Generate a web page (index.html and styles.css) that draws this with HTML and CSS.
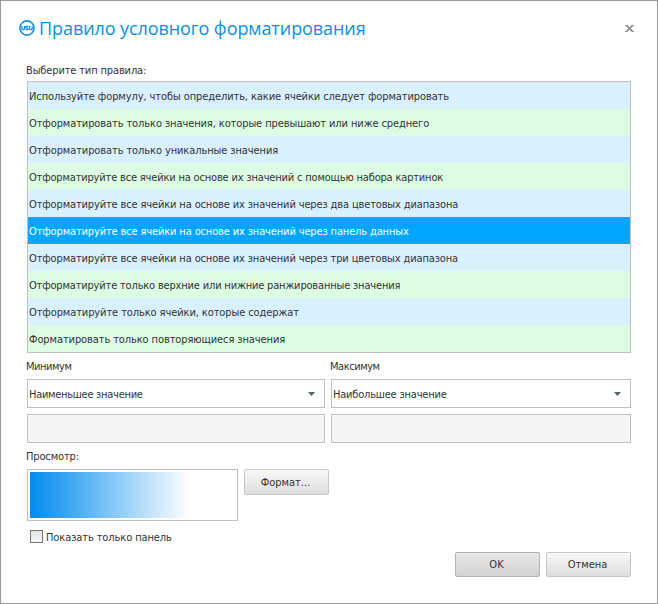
FILE: index.html
```html
<!DOCTYPE html>
<html lang="ru">
<head>
<meta charset="utf-8">
<title>Правило условного форматирования</title>
<link rel="stylesheet" href="styles.css">
</head>
<body>
<main class="dialog">
  <header class="titlebar">
    <svg class="logo" width="16" height="16" viewBox="0 0 16 16" fill="none" stroke="#0d8de8">
      <circle cx="8" cy="8" r="7.1" stroke-width="1.6"/>
      <path d="M2.9 6v2.4q0 1.3 1.3 1.3t1.3-1.3V6M9.4 6.4H7.5q-.8 0-.8.8t.8.8h.9q.8 0 .8.9t-.8.8H6.5M10.6 6v2.4q0 1.3 1.3 1.3t1.3-1.3V6" stroke-width="1.2"/>
    </svg>
    <h1 class="title">Правило условного форматирования</h1>
    <svg class="close" width="9" height="7" viewBox="0 0 9 7" fill="none" stroke="#999" stroke-width="1.9">
      <path d="M1 0L8 7M8 0L1 7"/><path d="M0 .5h2.5M6.5 .5H9M0 6.5h2.5M6.5 6.5H9" stroke-width="1"/>
    </svg>
  </header>
  <div class="label label-rule">Выберите тип правила:</div>
  <ul class="rules">
    <li>Используйте формулу, чтобы определить, какие ячейки следует форматировать</li>
    <li>Отформатировать только значения, которые превышают или ниже среднего</li>
    <li>Отформатировать только уникальные значения</li>
    <li class="tight">Отформатируйте все ячейки на основе их значений с помощью набора картинок</li>
    <li class="snug">Отформатируйте все ячейки на основе их значений через два цветовых диапазона</li>
    <li class="snug selected">Отформатируйте все ячейки на основе их значений через панель данных</li>
    <li class="snug">Отформатируйте все ячейки на основе их значений через три цветовых диапазона</li>
    <li class="tight">Отформатируйте только верхние или нижние ранжированные значения</li>
    <li>Отформатируйте только ячейки, которые содержат</li>
    <li>Форматировать только повторяющиеся значения</li>
  </ul>
  <div class="limits">
    <section>
      <div class="label">Минимум</div>
      <div class="combo combo-min"><span>Наименьшее значение</span><svg width="7" height="4" viewBox="0 0 7 4"><path d="M0 0h7L3.5 4z" fill="#56646c"/></svg></div>
      <div class="field"></div>
    </section>
    <section>
      <div class="label">Максимум</div>
      <div class="combo"><span>Наибольшее значение</span><svg width="7" height="4" viewBox="0 0 7 4"><path d="M0 0h7L3.5 4z" fill="#56646c"/></svg></div>
      <div class="field"></div>
    </section>
  </div>
  <div class="label label-preview">Просмотр:</div>
  <div class="preview-row">
    <div class="preview"><div class="bar"></div></div>
    <button class="btn format">Формат...</button>
  </div>
  <div class="check"><span class="box"></span><span class="check-text">Показать только панель</span></div>
  <footer class="actions">
    <button class="btn primary">OK</button>
    <button class="btn">Отмена</button>
  </footer>
</main>
</body>
</html>
```
FILE: styles.css
```css
* { box-sizing: border-box; }
body {
  margin: 0;
  background: #fff;
  color: #333;
  font: 11px/14px "DejaVu Sans Condensed", "DejaVu Sans", sans-serif;
  font-stretch: condensed;
}
.dialog {
  width: 658px;
  height: 604px;
  border: 1px solid #999;
  padding: 0 26px;
  overflow: hidden;
}
.titlebar {
  display: flex;
  align-items: center;
  height: 54px;
  margin: 0 -4px 0 -8px;
}
.title {
  margin: 0 auto 0 4px;
  color: #0d8fe0;
  font: 400 18px/28px "Open Sans", "Noto Sans", sans-serif;
  letter-spacing: -.08px;
  white-space: nowrap;
}
.close { margin-right: 1px; }
.label { height: 14px; margin-left: -1px; white-space: nowrap; letter-spacing: -.14px; }
.limits .label { letter-spacing: -.45px; }
.label-rule { margin-top: 9px; margin-bottom: 3px; }
.rules {
  margin: 0;
  padding: 0;
  list-style: none;
  border: 1px solid #bcc0c2;
  height: 272px;
}
.rules li {
  height: 27px;
  padding-left: 1px;
  line-height: 30px;
  letter-spacing: -.1px;
  white-space: nowrap;
  background: #d9f0ff;
}
.rules li:nth-child(even) { background: #dcfce4; }
.rules li.snug { letter-spacing: -.14px; }
.rules li.tight { letter-spacing: -.175px; }
.rules li.selected {
  background: #00a5ff;
  color: #fff;
  outline: 1px dotted #d67545;
  outline-offset: -1px;
}
.limits {
  display: grid;
  grid-template-columns: 298px 300px;
  gap: 6px;
  margin-top: 7px;
}
.combo, .field { height: 29px; border: 1px solid #c0c0c0; }
.combo {
  display: flex;
  align-items: center;
  justify-content: space-between;
  margin-top: 5px;
  padding: 0 9px 0 1px;
  letter-spacing: -.2px;
}
.combo span { padding-top: 2px; }
.combo-min { letter-spacing: -.28px; }
.field { margin-top: 6px; background: #f5f5f5; }
.label-preview { margin-top: 7px; }
.preview-row { display: flex; gap: 6px; margin-top: 5px; }
.preview { width: 211px; height: 52px; padding: 2px; border: 1px solid #c0c0c0; }
.bar { width: 159px; height: 46px; background: linear-gradient(90deg, #008bee, #fff); }
.btn {
  width: 85px;
  height: 25px;
  padding: 0 2px 0 0;
  border: 1px solid #c6c6c6;
  border-radius: 2px;
  background: linear-gradient(#f8f8f8, #dedede);
  color: #333;
  font: inherit;
}
.format { height: 26px; padding-top: 1px; }
.primary { border-color: #b3b3b3; background: linear-gradient(#e8e8e8, #d2d2d2); }
.check { display: flex; align-items: center; gap: 3px; margin: 9px 0 0 3px; height: 14px; }
.check-text { padding-top: 2px; letter-spacing: -.1px; }
.box { width: 13px; height: 13px; margin-top: -1px; border: 1px solid #777; background: linear-gradient(#e4e4e4, #f8f8f8); }
.actions { display: flex; justify-content: flex-end; gap: 6px; margin-top: 8px; }
```
